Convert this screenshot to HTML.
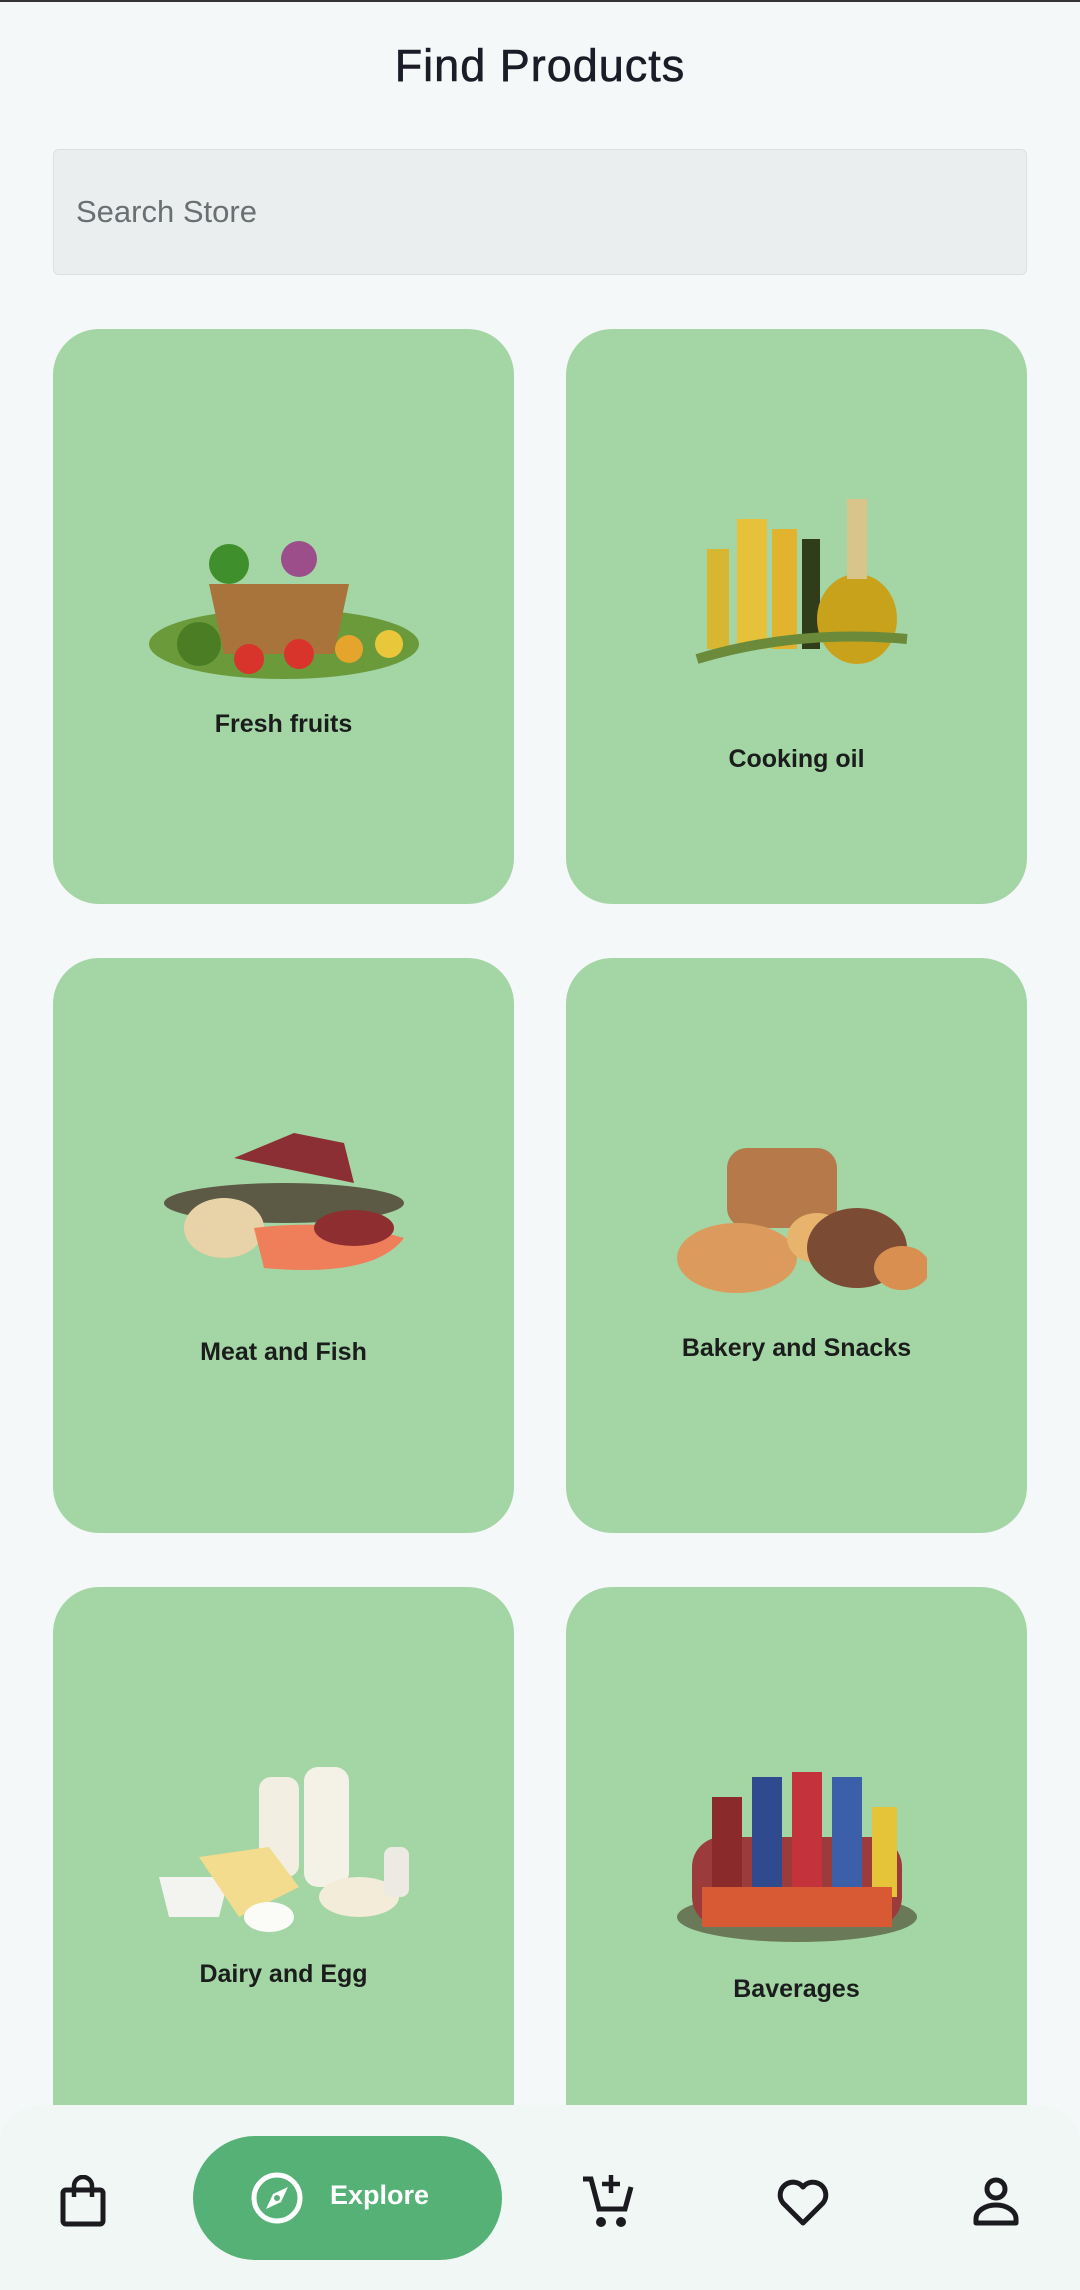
<!DOCTYPE html>
<html><head><meta charset="utf-8"><style>
*{margin:0;padding:0;box-sizing:border-box}
body{width:1080px;height:2288px;background:#f5f8f8;position:relative;overflow:hidden;font-family:"Liberation Sans",sans-serif;border-top:2px solid #333}
.title{position:absolute;top:38px;width:100%;text-align:center;font-size:45px;letter-spacing:1px;color:#1c1c28;font-weight:500;-webkit-text-stroke:0.6px #1c1c28}
.search{position:absolute;left:53px;top:147px;width:974px;height:126px;background:#ebeeee;border:1px solid #dde0e0;border-radius:6px;font-size:31px;color:#6a6f72;padding:44px 0 0 22px}
.card{position:absolute;width:461px;height:575px;background:#a3d5a5;border-radius:46px}
.lbl{position:absolute;width:100%;text-align:center;font-size:25px;font-weight:bold;color:#1b1d1c}
.img{position:absolute;left:50%;transform:translateX(-50%)}
.nav{position:absolute;left:0;top:2103px;width:1080px;height:185px;background:#f1f7f5;border-radius:40px 40px 0 0}
.pill{position:absolute;left:193px;top:31px;width:309px;height:124px;background:#55b176;border-radius:62px}
.pill span{position:absolute;left:137px;top:44px;color:#fff;font-weight:bold;font-size:27px}
</style></head><body>
<div class="title">Find Products</div>
<div class="search">Search Store</div>

<div class="card" style="left:53px;top:327px">
 <svg class="img" style="top:175px" width="290" height="180" viewBox="0 0 290 180"><ellipse cx="145" cy="140" rx="135" ry="35" fill="#6a9a3a"/><path d="M70 80 h140 l-15 70 h-110z" fill="#a9743b"/><circle cx="60" cy="140" r="22" fill="#4b7e24"/><circle cx="110" cy="155" r="15" fill="#d9342b"/><circle cx="160" cy="150" r="15" fill="#d9342b"/><circle cx="210" cy="145" r="14" fill="#e5a52d"/><circle cx="250" cy="140" r="14" fill="#e8c83a"/><circle cx="90" cy="60" r="20" fill="#3f8f2d"/><circle cx="160" cy="55" r="18" fill="#9c4e8a"/></svg>
 <div class="lbl" style="top:381px">Fresh fruits</div>
</div>
<div class="card" style="left:566px;top:327px">
 <svg class="img" style="top:150px" width="240" height="200" viewBox="0 0 240 200"><rect x="30" y="70" width="22" height="100" fill="#d7b632"/><rect x="60" y="40" width="30" height="130" fill="#e5c23a"/><rect x="95" y="50" width="25" height="120" fill="#e2b32e"/><rect x="125" y="60" width="18" height="110" fill="#2f3d1a"/><ellipse cx="180" cy="140" rx="40" ry="45" fill="#c9a21c"/><rect x="170" y="20" width="20" height="80" fill="#d9c489"/><path d="M20 180 q100 -30 210 -20" stroke="#6b8a3a" stroke-width="10" fill="none"/></svg>
 <div class="lbl" style="top:416px">Cooking oil</div>
</div>
<div class="card" style="left:53px;top:956px">
 <svg class="img" style="top:160px" width="260" height="170" viewBox="0 0 260 170"><path d="M80 40 l60 -25 l50 10 l10 40 z" fill="#8b2f34"/><ellipse cx="130" cy="85" rx="120" ry="20" fill="#5c5a44"/><ellipse cx="70" cy="110" rx="40" ry="30" fill="#e8d3a8"/><path d="M100 110 q80 -10 150 10 q-30 40 -140 30 z" fill="#ef7e5a"/><ellipse cx="200" cy="110" rx="40" ry="18" fill="#8e2e30"/></svg>
 <div class="lbl" style="top:380px">Meat and Fish</div>
</div>
<div class="card" style="left:566px;top:956px">
 <svg class="img" style="top:170px" width="260" height="170" viewBox="0 0 260 170"><rect x="60" y="20" width="110" height="80" rx="20" fill="#b5794a"/><ellipse cx="70" cy="130" rx="60" ry="35" fill="#dc9b5c"/><ellipse cx="150" cy="110" rx="30" ry="25" fill="#e7b36d"/><ellipse cx="190" cy="120" rx="50" ry="40" fill="#7c4b34"/><ellipse cx="235" cy="140" rx="28" ry="22" fill="#d98f4f"/></svg>
 <div class="lbl" style="top:376px">Bakery and Snacks</div>
</div>
<div class="card" style="left:53px;top:1585px">
 <svg class="img" style="top:180px" width="270" height="170" viewBox="0 0 270 170"><rect x="110" y="10" width="40" height="100" rx="12" fill="#f2efe2"/><rect x="155" y="0" width="45" height="120" rx="14" fill="#f4f1e6"/><path d="M10 110 h70 l-10 40 h-50z" fill="#f3f3ef"/><path d="M50 90 l70 -10 l30 40 l-60 30z" fill="#f3dc8e"/><ellipse cx="210" cy="130" rx="40" ry="20" fill="#f2ecd8"/><ellipse cx="120" cy="150" rx="25" ry="15" fill="#fbfbf8"/><rect x="235" y="80" width="25" height="50" rx="8" fill="#eceae3"/></svg>
 <div class="lbl" style="top:373px">Dairy and Egg</div>
</div>
<div class="card" style="left:566px;top:1585px">
 <svg class="img" style="top:170px" width="250" height="190" viewBox="0 0 250 190"><ellipse cx="125" cy="160" rx="120" ry="25" fill="#6a7a58"/><rect x="20" y="80" width="210" height="90" rx="30" fill="#9b3b3c"/><rect x="40" y="40" width="30" height="100" fill="#8a2a2a"/><rect x="80" y="20" width="30" height="120" fill="#2f4a8e"/><rect x="120" y="15" width="30" height="120" fill="#c4323b"/><rect x="160" y="20" width="30" height="120" fill="#3b5fa8"/><rect x="200" y="50" width="25" height="90" fill="#e6c43a"/><rect x="30" y="130" width="190" height="40" fill="#d85a35"/></svg>
 <div class="lbl" style="top:388px">Baverages</div>
</div>

<div class="nav">
 <svg style="position:absolute;left:60px;top:70px" width="46" height="52" viewBox="0 0 46 52"><rect x="3" y="15" width="40" height="34" rx="3" fill="none" stroke="#1b1b1f" stroke-width="5"/><path d="M14 22 V11 a9 9 0 0 1 18 0 V22" fill="none" stroke="#1b1b1f" stroke-width="4.5"/></svg>
 <div class="pill">
  <svg style="position:absolute;left:57px;top:35px" width="54" height="54" viewBox="0 0 54 54"><circle cx="27" cy="27" r="23" fill="none" stroke="#fff" stroke-width="5"/><path d="M38 16 L31 31 L16 38 L23 23 Z" fill="#fff"/><circle cx="27" cy="27" r="3" fill="#55b176"/></svg>
  <span>Explore</span>
 </div>
 <svg style="position:absolute;left:581px;top:68px" width="56" height="56" viewBox="0 0 56 56"><path d="M2 6 h8 l8 30 h26 l6 -22" fill="none" stroke="#1b1b1f" stroke-width="5"/><path d="M30 2 v18 M21 11 h18" stroke="#1b1b1f" stroke-width="4.5"/><circle cx="20" cy="49" r="5" fill="#1b1b1f"/><circle cx="40" cy="49" r="5" fill="#1b1b1f"/></svg>
 <svg style="position:absolute;left:776px;top:74px" width="54" height="48" viewBox="0 0 54 48"><path d="M27 44 L7 24 A11 11 0 0 1 27 8 A11 11 0 0 1 47 24 Z" fill="none" stroke="#1b1b1f" stroke-width="5" stroke-linejoin="round"/></svg>
 <svg style="position:absolute;left:973px;top:70px" width="46" height="52" viewBox="0 0 46 52"><circle cx="23" cy="14" r="9" fill="none" stroke="#1b1b1f" stroke-width="5"/><path d="M3 48 v-4 a20 14 0 0 1 40 0 v4 z" fill="none" stroke="#1b1b1f" stroke-width="5" stroke-linejoin="round"/></svg>
</div>
</body></html>
